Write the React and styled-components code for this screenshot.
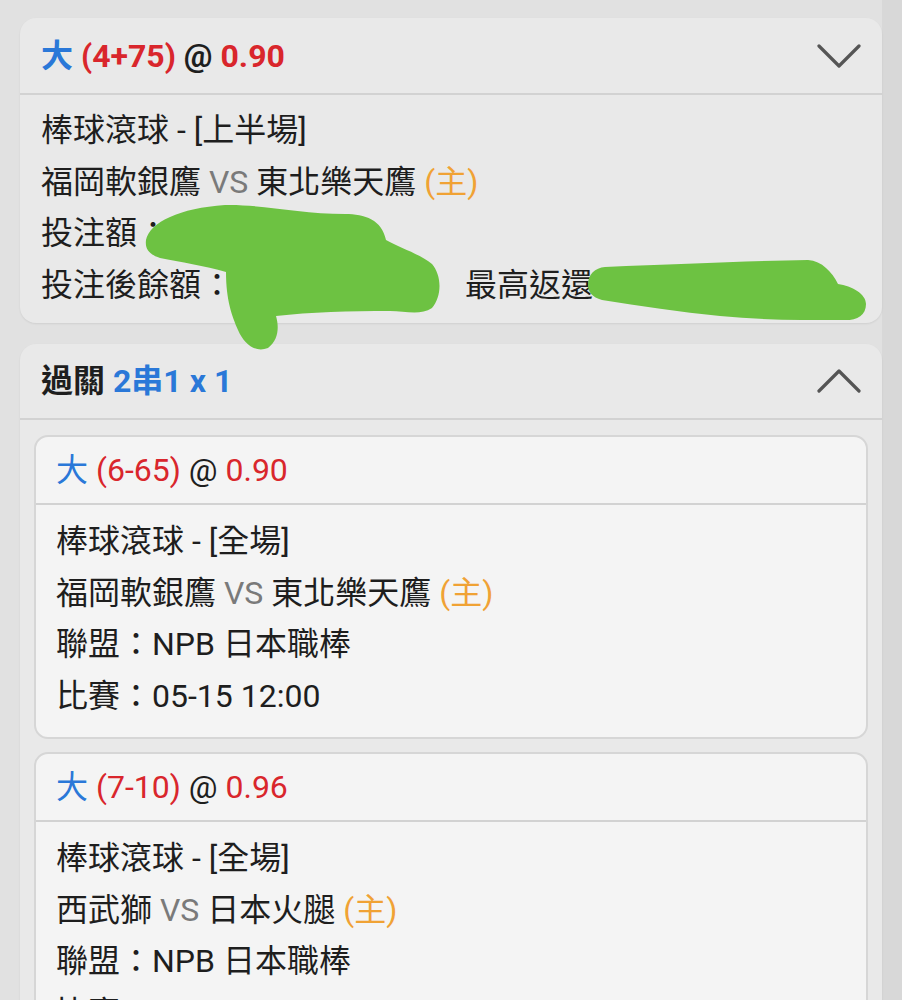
import React from "react";
import styled, { createGlobalStyle } from "styled-components";

const GlobalStyle = createGlobalStyle`
  html, body { margin: 0; padding: 0; }
  html { background: linear-gradient(to right, #e1e1e1 882px, #d8d8d8 882px); }
  body { font-family: "Roboto", "Noto Sans CJK TC", sans-serif; color: #1e1e1e; background: transparent; }
`;

const Page = styled.div`
  position: relative;
  display: flex;
  flex-direction: column;
  gap: 21px;
  padding: 18px 20px 40px 20px;
`;

const Card = styled.section`
  background: #e9e9e9;
  border-radius: 16px;
  box-shadow: 0 1px 2px rgba(0, 0, 0, 0.08);
  overflow: hidden;
`;

const CardHeader = styled.div`
  display: flex;
  align-items: center;
  justify-content: space-between;
  height: ${(p) => p.$h}px;
  padding: 0 21px 0 21px;
  border-bottom: 2px solid #d2d2d2;
  box-sizing: border-box;
`;

const Title = styled.div`
  font-size: 32px;
  font-weight: ${(p) => (p.$bold ? 700 : 400)};
  line-height: 1;
  white-space: pre;
`;

const Blue = styled.span`
  color: #2a78d8;
`;
const Red = styled.span`
  color: #d9262c;
`;
const Orange = styled.span`
  color: #f0a234;
`;
const Grey = styled.span`
  color: #7a7a7a;
`;

const Chevron = styled.svg`
  width: 44px;
  height: 26px;
  flex: none;
`;

const Body = styled.div`
  padding: ${(p) => p.$pad};
  display: flex;
  flex-direction: column;
`;

const Line = styled.div`
  font-size: 32px;
  line-height: 51.5px;
  white-space: pre;
`;

const SplitLine = styled.div`
  display: grid;
  grid-template-columns: 424px 1fr;
  font-size: 32px;
  line-height: 51.5px;
  white-space: pre;
`;

const ParlayBody = styled.div`
  padding: 15px 14px 14px 14px;
  display: flex;
  flex-direction: column;
  gap: 13px;
`;

const LegCard = styled.div`
  background: #f4f4f4;
  border: 2px solid #d6d6d6;
  border-radius: 14px;
  overflow: hidden;
`;

const LegHeader = styled.div`
  display: flex;
  align-items: center;
  height: 68px;
  padding: 0 20px;
  border-bottom: 2px solid #d2d2d2;
  box-sizing: border-box;
`;

const Overlay = styled.svg`
  position: absolute;
  top: 0;
  left: 0;
  width: 902px;
  height: 360px;
  pointer-events: none;
`;

const ChevronDown = () => (
  <Chevron viewBox="0 0 44 26">
    <polyline points="2,3 22,23 42,3" fill="none" stroke="#555" strokeWidth="3.2" strokeLinecap="round" strokeLinejoin="round" />
  </Chevron>
);

const ChevronUp = () => (
  <Chevron viewBox="0 0 44 26">
    <polyline points="2,23 22,3 42,23" fill="none" stroke="#555" strokeWidth="3.2" strokeLinecap="round" strokeLinejoin="round" />
  </Chevron>
);

const legs = [
  {
    line: "(6-65)",
    odds: "0.90",
    type: "棒球滾球 - [全場]",
    home: "福岡軟銀鷹",
    away: "東北樂天鷹",
    league: "NPB 日本職棒",
    time: "05-15 12:00",
  },
  {
    line: "(7-10)",
    odds: "0.96",
    type: "棒球滾球 - [全場]",
    home: "西武獅",
    away: "日本火腿",
    league: "NPB 日本職棒",
    time: "05-15 12:00",
  },
];

export default function App() {
  return (
    <>
      <GlobalStyle />
      <Page>
        <Card>
          <CardHeader $h={77}>
            <Title $bold>
              <Blue>大</Blue> <Red>(4+75)</Red> @ <Red>0.90</Red>
            </Title>
            <ChevronDown />
          </CardHeader>
          <Body $pad="10px 21px 12px 21px">
            <Line>棒球滾球 - [上半場]</Line>
            <Line>
              福岡軟銀鷹 <Grey>VS</Grey> 東北樂天鷹 <Orange>(主)</Orange>
            </Line>
            <Line>投注額：</Line>
            <SplitLine>
              <span>投注後餘額：</span>
              <span>最高返還：</span>
            </SplitLine>
          </Body>
        </Card>

        <Card>
          <CardHeader $h={76}>
            <Title $bold>
              過關 <Blue>2串1 x 1</Blue>
            </Title>
            <ChevronUp />
          </CardHeader>
          <ParlayBody>
            {legs.map((l, i) => (
              <LegCard key={i}>
                <LegHeader>
                  <Title>
                    <Blue>大</Blue> <Red>{l.line}</Red> @ <Red>{l.odds}</Red>
                  </Title>
                </LegHeader>
                <Body $pad="11px 20px 15px 20px">
                  <Line>{l.type}</Line>
                  <Line>
                    {l.home} <Grey>VS</Grey> {l.away} <Orange>(主)</Orange>
                  </Line>
                  <Line>聯盟：{l.league}</Line>
                  <Line>比賽：{l.time}</Line>
                </Body>
              </LegCard>
            ))}
          </ParlayBody>
        </Card>

        <Overlay viewBox="0 0 902 360">
          <path
            d="M146,240 C150,222 180,208 225,205 C260,204 300,214 345,214 C365,214 382,220 386,240 C400,248 420,254 432,264 C442,276 442,296 432,308 C420,316 405,311 390,311 C350,311 310,312 276,316 C279,326 279,340 268,348 C255,353 244,344 238,330 C232,316 226,300 226,272 C205,266 180,262 160,258 C148,254 145,248 146,240 Z"
            fill="#6dc242"
          />
          <path
            d="M588,285 C588,274 595,268 605,267 C680,264 750,261 808,260 C822,261 832,272 838,284 C852,286 866,294 866,304 C866,316 856,321 842,320 C800,320 760,320 720,316 C680,312 640,306 602,300 C592,297 588,292 588,285 Z"
            fill="#6dc242"
          />
        </Overlay>
      </Page>
    </>
  );
}
